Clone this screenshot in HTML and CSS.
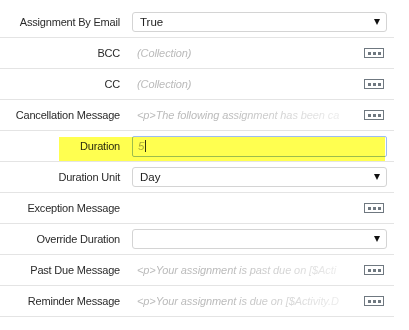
FILE: index.html
```html
<!DOCTYPE html>
<html>
<head>
    <meta charset="UTF-8">
    <title>Assignment Properties</title>
    <link rel="stylesheet" href="styles.css">
</head>
<body>
    <div class="props">
        <div class="row">
            <div class="label">Assignment By Email</div>
            <div class="value"><div class="select">True<span class="arrow"></span></div></div>
        </div>
        <div class="row">
            <div class="label">BCC</div>
            <div class="value"><span class="text">(Collection)</span><span class="more"><i></i><i></i><i></i></span></div>
        </div>
        <div class="row">
            <div class="label">CC</div>
            <div class="value"><span class="text">(Collection)</span><span class="more"><i></i><i></i><i></i></span></div>
        </div>
        <div class="row">
            <div class="label">Cancellation Message</div>
            <div class="value"><span class="text fade">&lt;p&gt;The following assignment has been ca</span><span class="more"><i></i><i></i><i></i></span></div>
        </div>
        <div class="row">
            <div class="highlight"></div>
            <div class="label">Duration</div>
            <div class="value"><div class="input">5<span class="caret"></span></div></div>
        </div>
        <div class="row">
            <div class="label">Duration Unit</div>
            <div class="value"><div class="select">Day<span class="arrow"></span></div></div>
        </div>
        <div class="row">
            <div class="label">Exception Message</div>
            <div class="value"><span class="text"></span><span class="more"><i></i><i></i><i></i></span></div>
        </div>
        <div class="row">
            <div class="label">Override Duration</div>
            <div class="value"><div class="select"><span class="arrow"></span></div></div>
        </div>
        <div class="row">
            <div class="label">Past Due Message</div>
            <div class="value"><span class="text fade">&lt;p&gt;Your assignment is past due on [$Acti</span><span class="more"><i></i><i></i><i></i></span></div>
        </div>
        <div class="row">
            <div class="label">Reminder Message</div>
            <div class="value"><span class="text fade">&lt;p&gt;Your assignment is due on [$Activity.D</span><span class="more"><i></i><i></i><i></i></span></div>
        </div>
    </div>
</body>
</html>
```

FILE: styles.css
```css
body {
    margin: 0;
    background: #fff;
    font-family: 'Liberation Sans', Arial, sans-serif;
    font-size: 11px;
    color: #333;
}
.props {
    width: 394px;
    padding-top: 7px;
}
.row {
    position: relative;
    display: grid;
    grid-template-columns: 120px 255px;
    column-gap: 12px;
    align-items: center;
    height: 30px;
    border-bottom: 1px solid #e4e4e4;
}
.label {
    text-align: right;
    color: #2a2a2a;
    letter-spacing: -0.2px;
}
.value {
    display: flex;
    align-items: center;
    height: 100%;
}
.text {
    flex: 1;
    padding-left: 5px;
    color: #bbbbbb;
    font-style: italic;
    white-space: nowrap;
    letter-spacing: -0.1px;
}
.text.fade {
    -webkit-mask-image: linear-gradient(to right, #000 40%, rgba(0,0,0,0.15) 97%, transparent 100%);
    mask-image: linear-gradient(to right, #000 40%, rgba(0,0,0,0.15) 97%, transparent 100%);
}
.more {
    display: flex;
    align-items: center;
    justify-content: center;
    gap: 2px;
    width: 18px;
    height: 8px;
    border: 1px solid #6f7880;
    margin-right: 3px;
}
.more i {
    width: 3px;
    height: 3px;
    background: #6f7880;
}
.select {
    position: relative;
    box-sizing: border-box;
    width: 255px;
    height: 20px;
    line-height: 18px;
    padding-left: 7px;
    border: 1px solid #d4d4d4;
    border-radius: 3px;
    color: #222;
    font-size: 11.5px;
}
.arrow {
    position: absolute;
    right: 6px;
    top: 6px;
    width: 0;
    height: 0;
    border-left: 3px solid transparent;
    border-right: 3px solid transparent;
    border-top: 6px solid #111;
}
.input {
    box-sizing: border-box;
    align-self: flex-start;
    width: 255px;
    height: 21px;
    line-height: 19px;
    padding-left: 5px;
    margin-top: 5px;
    border: 1px solid #9dbdf2;
    border-radius: 2px;
    color: #a9a9a9;
    font-style: italic;
    font-size: 11.5px;
}
.caret {
    display: inline-block;
    width: 1px;
    height: 12px;
    margin-left: 1px;
    vertical-align: -2px;
    background: #333;
}
.highlight {
    position: absolute;
    left: 59px;
    top: 6px;
    width: 326px;
    height: 24px;
    background: #ffff50;
    mix-blend-mode: multiply;
    z-index: 1;
}
```
